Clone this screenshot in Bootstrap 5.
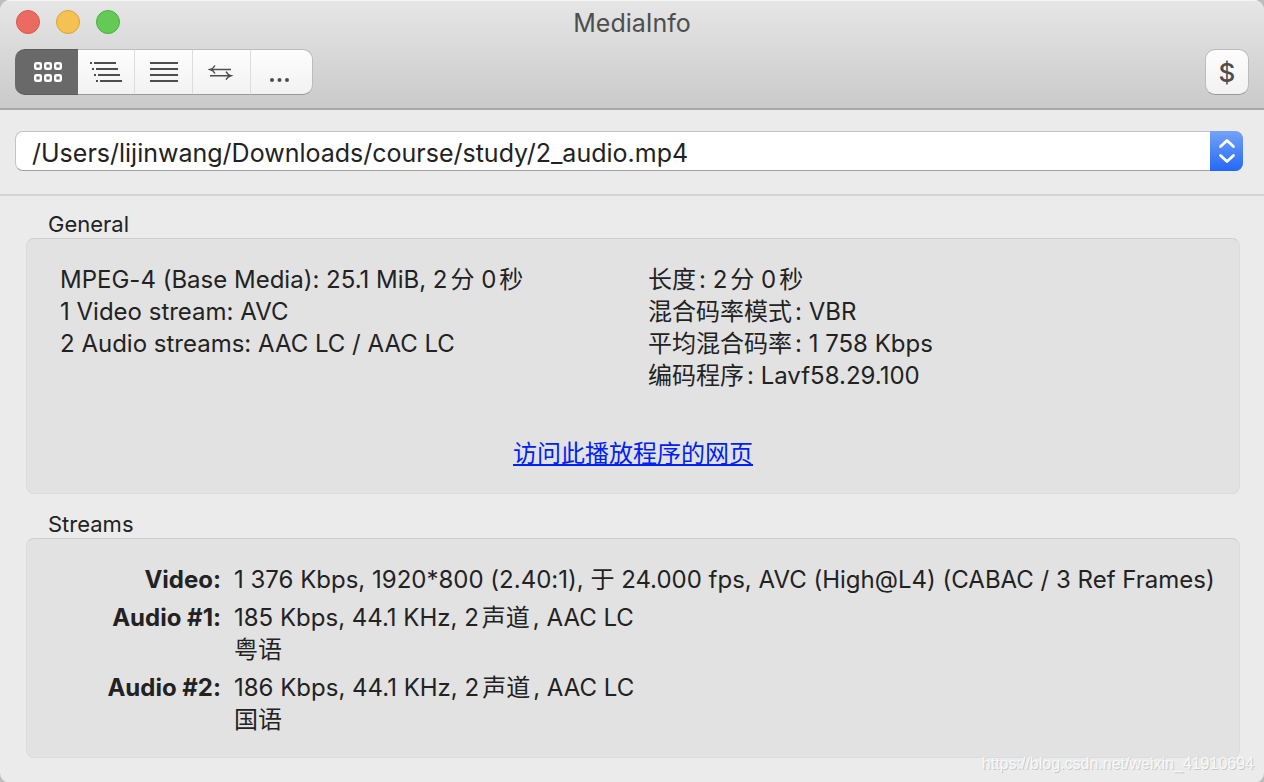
<!DOCTYPE html>
<html lang="zh-CN">
<head>
<meta charset="utf-8">
<meta name="viewport" content="width=device-width, initial-scale=1">
<title>MediaInfo</title>
<link rel="stylesheet" href="https://cdn.jsdelivr.net/npm/bootstrap@5.3.0/dist/css/bootstrap.min.css">
<style>
  body { background: #bdbdbd; font-family: Inter, "Noto Sans CJK SC", sans-serif; font-size: 24px; line-height: 32px; color: #222; font-variant-ligatures: no-contextual; text-autospace: normal; }
  .app-window { background: #ebebeb; border-radius: 10px; overflow: hidden; }
  .title-bar { background: linear-gradient(#e6e6e6, #cacaca); border-bottom: 2px solid #a8a8a8; box-shadow: inset 0 1px #f6f6f6; padding: 7px 15px 13px; }
  .title-bar h1 { font-size: 25px; line-height: 32px; color: #4e4e4e; margin-bottom: 10px; }
  .light { width: 24px; height: 24px; border: 1px solid; border-radius: 50%; }
  .light-close { background: #ec6b60; border-color: #d8574c; }
  .light-min { background: #f5c251; border-color: #d9a23c; }
  .light-zoom { background: #63ca56; border-color: #4dae3f; }
  .lights { gap: 16px; left: 16px; top: 10px; }
  .tool { width: 59px; height: 46px; padding: 0; border: 1px solid #bcbcbc; border-bottom-color: #999; border-left: 0; background: linear-gradient(#fdfdfd, #f2f2f2); color: #4d4d4d; border-radius: 10px; }
  .tool:hover { background: #f0f0f0; }
  .tool svg { display: block; margin: auto; }
  .btn-group .tool:not(:last-child) { border-right: 2px solid #dcdcdc; }
  .btn-group .tool.active { width: 63px; background: #696969; border-color: #5c5c5c; border-right-width: 0; color: #fff; }
  .btn-group .tool:last-child { width: 62px; }
  .tool.donate { width: 44px; border-left: 1px solid #bcbcbc; font-size: 26px; font-weight: 500; }
  .file-bar { padding: 21px 21px 23px 15px; border-bottom: 2px solid #d3d3d3; }
  .file-select { appearance: none; height: 40px; padding: 3px 48px 0 16px; border: 1px solid #c4c4c4; border-bottom-color: #a0a0a0; border-radius: 8px; background: #fff; font-size: 25px; line-height: 34px; color: #222; }
  .stepper { width: 33px; background: linear-gradient(#74a3f6, #2369f7); border-radius: 0 8px 8px 0; pointer-events: none; }
  .panes { padding: 12px 24px 25px 26px; }
  .pane-title { font-size: 22px; font-weight: 400; line-height: 32px; padding-left: 22px; margin: 0 0 -2px; }
  .pane { background: #e2e2e2; border: 1px solid #dbdbdb; border-top-color: #cecece; border-radius: 8px; }
  .pane-general { padding: 25px 0 23px; margin-bottom: 14px; }
  .col-file { padding-left: 33px; }
  .col-rate { padding-left: 15px; }
  .site-link { margin-top: 46px; }
  .site-link a { color: #0021f5; text-underline-offset: 2px; text-decoration-thickness: 2px; text-decoration-skip-ink: none; }
  .pane-streams { padding: 22px 20px 18px 0; }
  .streams th { width: 207px; padding: 3px 13px 3px 0; text-align: right; font-weight: 700; vertical-align: top; }
  .streams td { padding: 3px 0; }
  .watermark { right: 10px; bottom: 7px; font: 16px/24px "Liberation Sans", sans-serif; color: #f8f8f8; text-shadow: 1px 1px #c9c9c9; }
</style>
</head>
<body>
<main class="app-window position-relative min-vh-100">
  <header class="title-bar position-relative">
    <div class="lights d-flex position-absolute">
      <button type="button" class="btn p-0 light light-close" aria-label="Close"></button>
      <button type="button" class="btn p-0 light light-min" aria-label="Minimize"></button>
      <button type="button" class="btn p-0 light light-zoom" aria-label="Zoom"></button>
    </div>
    <h1 class="text-center fw-normal">MediaInfo</h1>
    <div class="d-flex justify-content-between">
      <div class="btn-group" role="group" aria-label="View">
        <button type="button" class="btn tool active" aria-label="Easy view">
          <svg width="32" height="24" viewBox="0 0 32 24" fill="none" stroke="currentColor" stroke-width="2.400"><rect x="4.200" y="3.200" width="5.600" height="5.600" rx="1"/><rect x="14.200" y="3.200" width="5.600" height="5.600" rx="1"/><rect x="24.200" y="3.200" width="5.600" height="5.600" rx="1"/><rect x="4.200" y="15.200" width="5.600" height="5.600" rx="1"/><rect x="14.200" y="15.200" width="5.600" height="5.600" rx="1"/><rect x="24.200" y="15.200" width="5.600" height="5.600" rx="1"/></svg>
        </button>
        <button type="button" class="btn tool" aria-label="Tree view">
          <svg width="32" height="24" viewBox="0 0 32 24" stroke="currentColor" stroke-width="2"><path d="M0 3h2M4 3h22M2 9h2M6 9h22M4 15h2M8 15h22M6 21h2M10 21h22"/></svg>
        </button>
        <button type="button" class="btn tool" aria-label="Text view">
          <svg width="28" height="24" viewBox="0 0 28 24" stroke="currentColor" stroke-width="2"><path d="M0 3h28M0 9h28M0 15h28M0 21h28"/></svg>
        </button>
        <button type="button" class="btn tool" aria-label="Compare">
          <svg width="28" height="24" viewBox="0 0 28 24" fill="none" stroke="currentColor" stroke-width="1.500"><path d="M2 9.500h21M7 5.500Q5.500 8.500 2 9.500Q5.500 10.500 7 13.500M2 15.700h21M18 11.700Q19.500 14.700 23 15.700Q19.500 16.700 18 19.700"/></svg>
        </button>
        <button type="button" class="btn tool" aria-label="More">
          <svg width="28" height="24" viewBox="0 0 28 24" fill="currentColor"><circle cx="4" cy="20" r="2"/><circle cx="11.500" cy="20" r="2"/><circle cx="19" cy="20" r="2"/></svg>
        </button>
      </div>
      <button type="button" class="btn tool donate">$</button>
    </div>
  </header>

  <div class="file-bar">
    <div class="position-relative">
      <select class="d-block w-100 file-select" aria-label="File">
        <option>/Users/lijinwang/Downloads/course/study/2_audio.mp4</option>
      </select>
      <span class="stepper position-absolute top-0 end-0 h-100 d-flex align-items-center justify-content-center">
        <svg width="18" height="26" viewBox="0 0 18 26" fill="none" stroke="#fff" stroke-width="2.800" stroke-linecap="round" stroke-linejoin="round"><path d="M2.500 8.500L9 2.500l6.500 6M2.500 17.500l6.500 6 6.500-6"/></svg>
      </span>
    </div>
  </div>

  <div class="panes">
    <h2 class="pane-title">General</h2>
    <section class="pane pane-general">
      <div class="row g-0">
        <div class="col-6 col-file">
          <div>MPEG-4 (Base Media): 25.1 MiB, 2分 0秒</div>
          <div>1 Video stream: AVC</div>
          <div>2 Audio streams: AAC LC / AAC LC</div>
        </div>
        <div class="col-6 col-rate">
          <div>长度: 2分 0秒</div>
          <div>混合码率模式: VBR</div>
          <div>平均混合码率: 1 758 Kbps</div>
          <div>编码程序: Lavf58.29.100</div>
        </div>
      </div>
      <div class="site-link text-center"><a href="#">访问此播放程序的网页</a></div>
    </section>

    <h2 class="pane-title">Streams</h2>
    <section class="pane pane-streams">
      <table class="streams w-100">
        <tbody>
          <tr><th scope="row">Video:</th><td>1 376 Kbps, 1920*800 (2.40:1), 于 24.000 fps, AVC (High@L4) (CABAC / 3 Ref Frames)</td></tr>
          <tr><th scope="row">Audio #1:</th><td>185 Kbps, 44.1 KHz, 2声道, AAC LC<br>粤语</td></tr>
          <tr><th scope="row">Audio #2:</th><td>186 Kbps, 44.1 KHz, 2声道, AAC LC<br>国语</td></tr>
        </tbody>
      </table>
    </section>
  </div>
  <div class="watermark position-absolute">https://blog.csdn.net/weixin_41910694</div>
</main>
<script src="https://cdn.jsdelivr.net/npm/bootstrap@5.3.0/dist/js/bootstrap.bundle.min.js"></script>
</body>
</html>
